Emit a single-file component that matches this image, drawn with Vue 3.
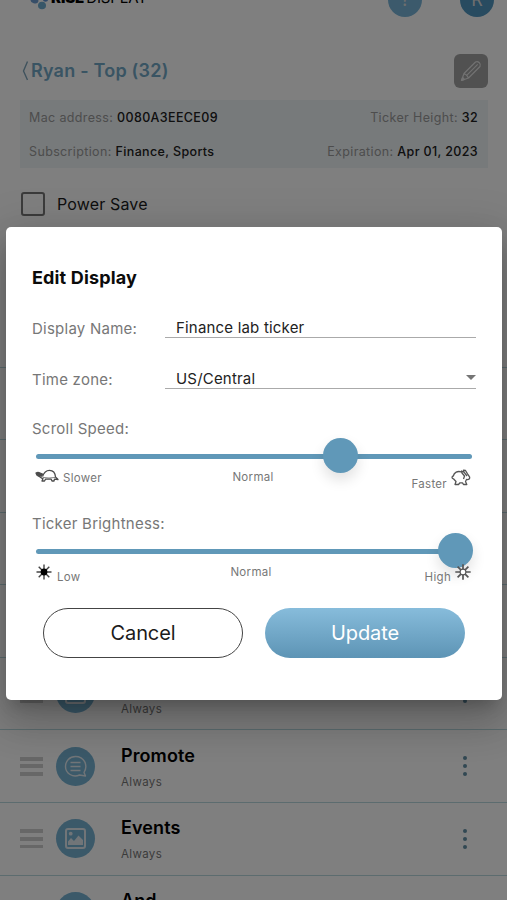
<script setup>
import { ref } from 'vue'

const rows = [
  { id: 1, icon: 'image' },
  { id: 2, icon: 'chat' },
  { id: 3, icon: 'chat' },
  { id: 4, icon: 'image' },
  { id: 5, icon: 'image', when: 'Always' },
  { id: 6, title: 'Promote', icon: 'chat', when: 'Always' },
  { id: 7, title: 'Events', icon: 'image', when: 'Always' },
  { id: 8, title: 'And', icon: 'chat' },
]
const displayName = ref('Finance lab ticker')
const timeZone = ref('US/Central')
const speed = ref(69.8)
const brightness = ref(96.3)
</script>

<template>
  <div class="screen">
    <div class="page">
      <header class="topbar">
        <svg class="mark" width="22" height="18" viewBox="0 0 22 18">
          <ellipse cx="7.500" cy="8.500" rx="4" ry="2.800" fill="#6f9cd0" transform="rotate(20 7.500 8.500)" />
          <ellipse cx="15" cy="13.500" rx="4" ry="3.800" fill="#6facd0" />
          <ellipse cx="18.500" cy="7.500" rx="2.600" ry="2.300" fill="#5c8fd0" />
        </svg>
        <span class="brand"><b>RISE</b>DISPLAY</span>
        <span class="round help">?</span>
        <span class="round user">R</span>
      </header>

      <div class="titlebar">
        <svg class="back" width="8" height="22" viewBox="0 0 8 22"><path d="M6.500 1.500 L2.500 11 L6.500 20" fill="none" stroke="#7fa5ba" stroke-width="1.400" /></svg>
        <h1>Ryan - Top (32)</h1>
        <span class="edit">
          <svg width="24" height="24" viewBox="0 0 24 24" fill="none" stroke="#e4e4e4" stroke-width="1.200" stroke-linejoin="round">
            <path d="M2.500 21.500 L5 14.500 L16.500 3 Q18.500 2 20.300 3.700 Q22 5.500 21 7.500 L9.500 19 Z M5 14.500 Q8 15.500 9.500 19 M7.200 16.800 L18.700 5.300" />
            <path d="M2.500 21.500 L3.600 18.500 L5.500 20.400 Z" fill="#e4e4e4" />
          </svg>
        </span>
      </div>

      <section class="info">
        <div><span>Mac address: <b>0080A3EECE09</b></span><span>Ticker Height: <b>32</b></span></div>
        <div><span>Subscription: <b>Finance, Sports</b></span><span>Expiration: <b>Apr 01, 2023</b></span></div>
      </section>

      <label class="power"><i></i>Power Save</label>

      <ul class="list">
        <li v-for="row in rows" :key="row.id">
          <span class="grip"><i></i><i></i><i></i></span>
          <span class="badge">
            <svg v-if="row.icon === 'chat'" width="23" height="23" viewBox="0 0 23 23" fill="none" stroke="#e2ebf0" stroke-width="1.400" stroke-linejoin="round">
              <path d="M20 17.500 C24.500 10 20 1.500 11.500 1.500 C5.500 1.500 1.500 6 1.500 11.500 C1.500 18.500 9 23 15.500 20 L21.500 21 Z" />
              <path d="M6.500 7.500 H16.500 M6.500 11.500 H16.500 M6.500 15.500 H16.500" />
            </svg>
            <svg v-else width="23" height="23" viewBox="0 0 23 23">
              <rect x="2" y="2" width="19" height="19" rx="2" fill="none" stroke="#e2ebf0" stroke-width="2" />
              <circle cx="6.700" cy="6.700" r="1.900" fill="#e2ebf0" />
              <path d="M4 18 V14.500 L7 11 L10 14 L14.500 8.500 L19 13 V18 Z" fill="#e2ebf0" />
            </svg>
          </span>
          <div class="name">
            <strong v-if="row.title">{{ row.title }}</strong>
            <small v-if="row.when">{{ row.when }}</small>
          </div>
          <span class="dots"><i></i><i></i><i></i></span>
        </li>
      </ul>
    </div>

    <div class="backdrop">
      <div class="dialog">
        <h2>Edit Display</h2>
        <div class="field"><span class="label">Display Name:</span><span class="value">{{ displayName }}</span></div>
        <div class="field zone">
          <span class="label">Time zone:</span>
          <span class="value">{{ timeZone }}<i class="arrow"></i></span>
        </div>

        <div class="slider-label">Scroll Speed:</div>
        <div class="track"><i class="knob" :style="{ left: speed + '%' }"></i></div>
        <div class="legend">
          <span class="start">
            <svg class="turtle" width="24" height="14" viewBox="0 0 24 14" fill="none" stroke="#4c4c4c" stroke-width="1.300" stroke-linejoin="round">
              <path d="M7.500 7.500 C9 3 11.500 1.300 14.500 1.300 C18 1.300 20.200 4 20.500 8 L23 10.500 L19.500 10.200 L19 12 H17 L16.200 10.200 H10.500 L9.500 12 H7 L8 9.500 C5.500 9.500 5 7 2.500 6.500" />
              <path d="M1 4 Q3 3 5 4 L7.500 5.200 L6.500 7.200 L2 6.200 Z" fill="#4c4c4c" />
              <path d="M8 8.500 Q14 9.500 20 8.500" stroke-width=".7" />
            </svg>
            <em>Slower</em>
          </span>
          <span class="mid">Normal</span>
          <span class="end">
            <em>Faster</em>
            <svg class="rabbit" width="20" height="18" viewBox="0 0 20 18" fill="none" stroke="#555" stroke-width="1.300" stroke-linejoin="round">
              <path d="M10.500 3 C6.500 1.500 3 3.500 2.300 7 C.6 7.300 .6 9.500 2.400 9.800 L5 12.500 L4 15.500 H7.500 L9 13.800 H11.500 L12.500 15.500 H15.800 L14.500 12.500 L15.500 10.500 C18 10.800 19.300 9.500 18.500 7.800 L16.500 4.800 L14.500 1.500 L12.500 1.200 L13 3.200 L10.500 2 L11 4 L13.500 7 L12.500 10 M13 3.200 L16 7" />
            </svg>
          </span>
        </div>

        <div class="slider-label bright">Ticker Brightness:</div>
        <div class="track"><i class="knob" :style="{ left: brightness + '%' }"></i></div>
        <div class="legend light">
          <span class="start">
            <svg width="16" height="16" viewBox="0 0 16 16" stroke="#444" stroke-width="1.400">
              <path d="M8 .5 V15.500 M.5 8 H15.500 M2.700 2.700 L13.300 13.300 M13.300 2.700 L2.700 13.300" />
              <circle cx="8" cy="8" r="3.400" fill="#000" stroke="none" />
            </svg>
            <em>Low</em>
          </span>
          <span class="mid">Normal</span>
          <span class="end">
            <em>High</em>
            <svg class="sun" width="16" height="16" viewBox="0 0 16 16" stroke="#555" stroke-width="1.700">
              <path d="M8 .3 V15.700 M.3 8 H15.700 M2.600 2.600 L13.400 13.400 M13.400 2.600 L2.600 13.400" />
              <circle cx="8" cy="8" r="2.900" fill="#fff" stroke-width="1.100" />
            </svg>
          </span>
        </div>

        <div class="actions">
          <button class="cancel">Cancel</button>
          <button class="update">Update</button>
        </div>
      </div>
    </div>
  </div>
</template>

<style>
body { margin: 0; overflow: hidden; }
</style>

<style scoped>
* { box-sizing: border-box; }
.screen { position: relative; width: 507px; height: 900px; overflow: hidden; background: #fff; font-family: Inter, "Liberation Sans", sans-serif; color: #1c1c1c; }
.topbar { height: 17px; display: flex; align-items: flex-end; padding: 0 13px 0 27px; }
.mark { flex: none; margin-bottom: 7px; }
.brand { font-size: 15px; line-height: 18px; color: #000; margin: 0 auto 10px 2px; letter-spacing: -.1px; white-space: nowrap; }
.brand b { font-weight: 900; margin-right: 2px; }
.round { width: 34px; height: 34px; flex: none; border-radius: 50%; color: #ddd; font-size: 18px; line-height: 34px; text-align: center; background: #78b5d8; }
.user { margin-left: 38px; background: #5096c0; }
.titlebar { height: 83px; display: flex; align-items: center; padding: 24px 19px 0 21px; }
.titlebar h1 { margin: 0 auto 0 2px; font-size: 18px; font-weight: 600; letter-spacing: .22px; color: #72a8c6; }
.edit { width: 34px; height: 34px; display: flex; align-items: center; justify-content: center; border-radius: 6px; background: #a2a2a2; }
.info { margin: 0 19px 0 20px; height: 68px; padding: 9px 10px 0 9px; background: #eff4f7; font-size: 12.5px; letter-spacing: .36px; color: #9a9a9a; }
.info div { height: 34px; line-height: 17px; display: flex; justify-content: space-between; }
.info b { font-weight: 500; color: #202020; }
.power { display: flex; align-items: center; gap: 12px; height: 24px; margin: 24px 0 0 21px; font-size: 16px; letter-spacing: .15px; }
.power i { width: 24px; height: 24px; border: 2.500px solid #777; border-radius: 3px; }
.list { list-style: none; margin: 150.500px 0 0; padding: 0; border-top: 1px solid #b9d8de; }
.list li { height: 72.600px; display: flex; align-items: center; padding: 0 40px 0 20px; border-bottom: 1.500px solid #b9d8de; }
.grip { width: 23px; display: flex; flex-direction: column; gap: 3.800px; }
.grip i { height: 3.800px; background: #cecece; }
.badge { width: 39px; height: 39px; margin-left: 13px; border-radius: 50%; display: flex; align-items: center; justify-content: center; background: #76b2d3; }
.name { height: 47px; margin: 0 auto 0 26px; display: flex; flex-direction: column; }
.name strong { font-size: 18px; line-height: 26px; font-weight: 600; color: #000; letter-spacing: .1px; }
.name small { font-size: 11.500px; line-height: 16px; margin-top: auto; letter-spacing: .35px; color: #777; }
.dots { width: 5px; display: flex; flex-direction: column; align-items: center; gap: 3.800px; }
.dots i { width: 4px; height: 4px; border-radius: 50%; background: #6390a6; }

.backdrop { position: absolute; inset: 0; padding: 227px 5px 0 6px; background: rgba(0, 0, 0, .5); }
.dialog { height: 472.500px; padding: 39px 26px 0; border-radius: 5px; background: #fff; box-shadow: 0 11px 15px -7px rgba(0, 0, 0, .2), 0 24px 38px 3px rgba(0, 0, 0, .14), 0 9px 46px 8px rgba(0, 0, 0, .12); }
h2 { margin: 0 0 28px; font-size: 18px; line-height: 24px; font-weight: 700; letter-spacing: .15px; color: #0b0b0b; }
.field { height: 20px; display: flex; line-height: 20px; font-size: 15px; }
.zone { margin: 31px 0 30px; }
.label, .slider-label { color: #777; font-size: 15px; letter-spacing: .24px; }
.label { width: 133px; padding-top: .5px; }
.value { flex: 1; display: flex; justify-content: space-between; align-items: center; padding-left: 11px; border-bottom: 1px solid #aaa; letter-spacing: .19px; color: #222; }
.arrow { margin-bottom: 3px; border: 5px solid transparent; border-top-color: #757575; border-bottom: 0; }
.slider-label { height: 20px; line-height: 20px; }
.track { position: relative; height: 5.500px; margin: 14.500px 4px 0; border-radius: 3px; background: #6098b8; }
.knob { position: absolute; top: -16px; width: 35px; height: 35px; margin-left: -17.500px; border-radius: 50%; background: #6098b8; box-shadow: 0 7px 14px rgba(0, 0, 0, .12); }
.legend { position: relative; display: grid; grid-template-columns: 1fr auto 1fr; height: 55px; padding: 9.500px 5px 0 3px; font-size: 11.500px; line-height: 16px; letter-spacing: .3px; color: #777; }
.legend span { display: flex; align-items: flex-start; }
.legend em { font-style: normal; }
.start { gap: 4px; }
.start em { margin-top: 1px; }
.end { justify-content: flex-end; gap: 4px; }
.end em { margin-top: 7px; }
.light { height: 54px; padding-top: 10px; padding-left: 4px; }
.light .mid { margin: 0 2px 0 -3px; }
.light .start { gap: 5px; }
.light .start em, .light .end em { margin-top: 5px; }
.actions { display: flex; gap: 22px; padding-left: 11px; }
.actions button { width: 200px; height: 49.500px; padding: 0; border-radius: 25px; font: 400 20px/46px Inter, "Liberation Sans", sans-serif; letter-spacing: -.1px; }
.cancel { border: 1.500px solid #444; background: #fff; color: #1b1b1b; }
.update { border: 0; background: linear-gradient(#87bcdb, #5d94b5); color: #fff; }
</style>
